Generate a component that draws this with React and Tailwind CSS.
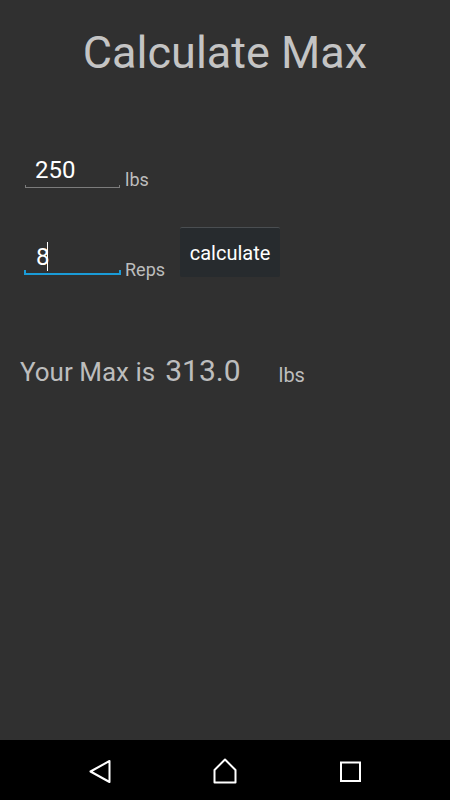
export default function App() {
  const font = { fontFamily: 'Roboto, "Noto Sans", sans-serif' };
  return (
    <div className="w-[450px] h-[800px] flex flex-col bg-[#303030]" style={font}>
      <div className="flex-1 flex flex-col">
        <div className="mt-[27px] text-center text-[45px] leading-[52px] text-[#c4c4c4]">Calculate Max</div>

        {/* weight row */}
        <div className="mt-[77px] flex items-end pl-[24px]">
          <div className="relative w-[96px] h-[36px]">
            <div className="pl-[11px] text-[24px] leading-[28px] text-white">250</div>
            <div className="absolute left-[1px] right-0 bottom-[4px] h-[1px] bg-[#7c7c7c]" />
            <div className="absolute left-[1px] bottom-[4px] w-[1px] h-[3px] bg-[#7c7c7c]" />
            <div className="absolute right-0 bottom-[4px] w-[1px] h-[3px] bg-[#7c7c7c]" />
          </div>
          <div className="ml-[5px] mb-[2px] text-[18px] leading-[21px] text-[#bdbdbd]">lbs</div>
        </div>

        {/* reps row */}
        <div className="mt-[19px] flex items-start pl-[24px] h-[66px]">
          <div className="relative w-[97px] h-[64px]">
            <div className="absolute left-[12px] top-[32px] text-[24px] leading-[28px] text-white">8</div>
            <div className="absolute left-[23px] top-[31px] w-[1px] h-[29px] bg-white" />
            <div className="absolute left-0 right-0 bottom-0 h-[2px] bg-[#1a9bd7]" />
            <div className="absolute left-0 bottom-0 w-[2px] h-[5px] bg-[#1a9bd7]" />
            <div className="absolute right-0 bottom-0 w-[2px] h-[5px] bg-[#1a9bd7]" />
          </div>
          <div className="ml-[4px] mt-[48px] text-[18px] leading-[21px] text-[#bdbdbd]">Reps</div>
          <button className="ml-[15px] mt-[16px] w-[100px] h-[50px] bg-[#272b2e] border-t border-[#4a4e51] rounded-[2px] text-[20px] text-white flex items-center justify-center" style={font}>
            calculate
          </button>
        </div>

        {/* result row */}
        <div className="mt-[71px] flex items-baseline pl-[20px]">
          <span className="text-[26px] text-[#bdbdbd]">Your Max is</span>
          <span className="ml-[10px] text-[30px] text-[#bdbdbd]">313.0</span>
          <span className="ml-[38px] text-[20px] text-[#bdbdbd] relative top-[1px]">lbs</span>
        </div>
      </div>

      <div className="h-[60px] bg-black flex items-center">
        <svg width="450" height="60" viewBox="0 0 450 60">
          <path d="M109.5 21 L90.5 31.5 L109.5 42 Z" fill="none" stroke="white" strokeWidth="2" strokeLinejoin="round" />
          <path d="M225 19.5 L235.5 30 L235.5 42.5 L214.5 42.5 L214.5 30 Z" fill="none" stroke="white" strokeWidth="2" strokeLinejoin="round" />
          <rect x="341" y="22.5" width="19" height="18.5" fill="none" stroke="white" strokeWidth="2" />
        </svg>
      </div>
    </div>
  );
}
